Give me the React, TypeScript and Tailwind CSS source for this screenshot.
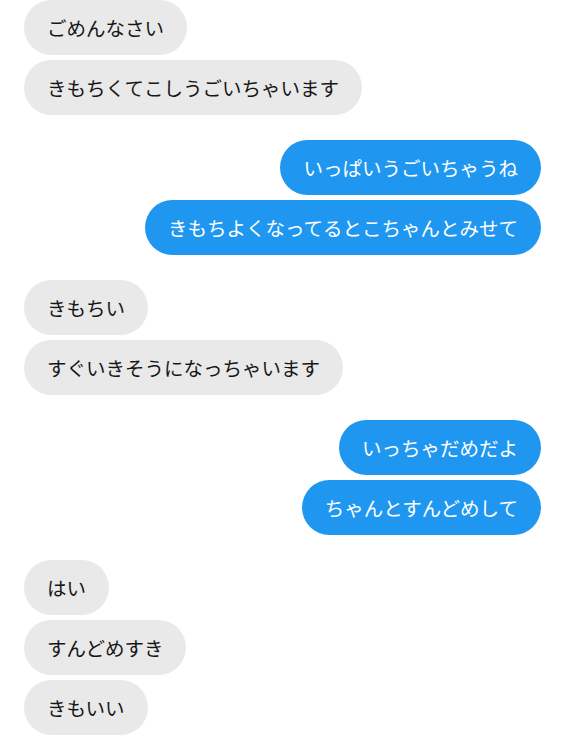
import React from "react";

type Msg = { text: string; me: boolean };

const groups: Msg[][] = [
  [
    { text: "ごめんなさい", me: false },
    { text: "きもちくてこしうごいちゃいます", me: false },
  ],
  [
    { text: "いっぱいうごいちゃうね", me: true },
    { text: "きもちよくなってるとこちゃんとみせて", me: true },
  ],
  [
    { text: "きもちい", me: false },
    { text: "すぐいきそうになっちゃいます", me: false },
  ],
  [
    { text: "いっちゃだめだよ", me: true },
    { text: "ちゃんとすんどめして", me: true },
  ],
  [
    { text: "はい", me: false },
    { text: "すんどめすき", me: false },
    { text: "きもいい", me: false },
  ],
];

export default function App() {
  return (
    <div
      className="w-[565px] h-[744px] bg-white overflow-hidden px-[24px] flex flex-col gap-[25px]"
      style={{ fontFamily: '"Hiragino Sans", "Noto Sans CJK JP", sans-serif' }}
    >
      {groups.map((g, i) => (
        <div key={i} className="flex flex-col gap-[5px]">
          {g.map((m, j) => (
            <div key={j} className={m.me ? "flex justify-end" : "flex justify-start"}>
              <div
                className={
                  m.me
                    ? "h-[55px] flex items-center px-[23px] rounded-full bg-[#1f97f0] text-white text-[19.5px] leading-none whitespace-nowrap"
                    : "h-[55px] flex items-center px-[23px] rounded-full bg-[#e9e9e9] text-[#161616] text-[19.5px] leading-none whitespace-nowrap"
                }
              >
                {m.text}
              </div>
            </div>
          ))}
        </div>
      ))}
    </div>
  );
}
